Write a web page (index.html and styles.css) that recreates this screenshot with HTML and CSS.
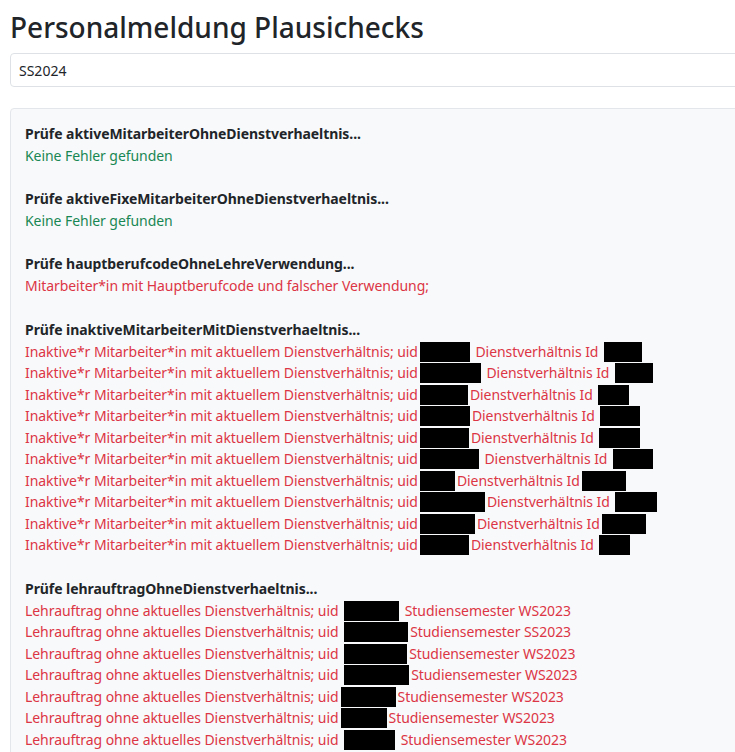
FILE: index.html
```html
<!DOCTYPE html>
<html lang="de">
<head>
  <meta charset="UTF-8" />
  <meta name="viewport" content="width=device-width, initial-scale=1.0" />
  <title>Personalmeldung Plausichecks</title>
  <link rel="stylesheet" href="styles.css">
</head>
<body>
  <div class="page">
    <h1>Personalmeldung Plausichecks</h1>

    <input type="text" class="semester-input" value="SS2024" />

    <div class="results">
      <div class="check">
        <div class="check-title">Prüfe aktiveMitarbeiterOhneDienstverhaeltnis...</div>
        <div class="ok">Keine Fehler gefunden</div>
      </div>

      <div class="check">
        <div class="check-title">Prüfe aktiveFixeMitarbeiterOhneDienstverhaeltnis...</div>
        <div class="ok">Keine Fehler gefunden</div>
      </div>

      <div class="check">
        <div class="check-title">Prüfe hauptberufcodeOhneLehreVerwendung...</div>
        <div class="error">Mitarbeiter*in mit Hauptberufcode und falscher Verwendung;</div>
      </div>

      <div class="check">
        <div class="check-title">Prüfe inaktiveMitarbeiterMitDienstverhaeltnis...</div>
        <div class="error">Inaktive*r Mitarbeiter*in mit aktuellem Dienstverhältnis; uid<span class="redacted" style="width:50px"></span> Dienstverhältnis Id <span class="redacted" style="width:38px"></span></div>
        <div class="error">Inaktive*r Mitarbeiter*in mit aktuellem Dienstverhältnis; uid<span class="redacted" style="width:61px"></span> Dienstverhältnis Id <span class="redacted" style="width:38px"></span></div>
        <div class="error">Inaktive*r Mitarbeiter*in mit aktuellem Dienstverhältnis; uid<span class="redacted" style="width:48px"></span>Dienstverhältnis Id <span class="redacted" style="width:31px"></span></div>
        <div class="error">Inaktive*r Mitarbeiter*in mit aktuellem Dienstverhältnis; uid<span class="redacted" style="width:50px"></span>Dienstverhältnis Id <span class="redacted" style="width:40px"></span></div>
        <div class="error">Inaktive*r Mitarbeiter*in mit aktuellem Dienstverhältnis; uid<span class="redacted" style="width:49px"></span>Dienstverhältnis Id <span class="redacted" style="width:41px"></span></div>
        <div class="error">Inaktive*r Mitarbeiter*in mit aktuellem Dienstverhältnis; uid<span class="redacted" style="width:59px"></span> Dienstverhältnis Id <span class="redacted" style="width:40px"></span></div>
        <div class="error">Inaktive*r Mitarbeiter*in mit aktuellem Dienstverhältnis; uid<span class="redacted" style="width:35px"></span>Dienstverhältnis Id<span class="redacted" style="width:44px"></span></div>
        <div class="error">Inaktive*r Mitarbeiter*in mit aktuellem Dienstverhältnis; uid<span class="redacted" style="width:65px"></span>Dienstverhältnis Id <span class="redacted" style="width:42px"></span></div>
        <div class="error">Inaktive*r Mitarbeiter*in mit aktuellem Dienstverhältnis; uid<span class="redacted" style="width:55px"></span>Dienstverhältnis Id<span class="redacted" style="width:44px"></span></div>
        <div class="error">Inaktive*r Mitarbeiter*in mit aktuellem Dienstverhältnis; uid<span class="redacted" style="width:49px"></span>Dienstverhältnis Id <span class="redacted" style="width:31px"></span></div>
      </div>

      <div class="check">
        <div class="check-title">Prüfe lehrauftragOhneDienstverhaeltnis...</div>
        <div class="error">Lehrauftrag ohne aktuelles Dienstverhältnis; uid <span class="redacted" style="width:55px"></span> Studiensemester WS2023</div>
        <div class="error">Lehrauftrag ohne aktuelles Dienstverhältnis; uid <span class="redacted" style="width:64px"></span>Studiensemester SS2023</div>
        <div class="error">Lehrauftrag ohne aktuelles Dienstverhältnis; uid <span class="redacted" style="width:63px"></span>Studiensemester WS2023</div>
        <div class="error">Lehrauftrag ohne aktuelles Dienstverhältnis; uid <span class="redacted" style="width:65px"></span>Studiensemester WS2023</div>
        <div class="error">Lehrauftrag ohne aktuelles Dienstverhältnis; uid<span class="redacted" style="width:55px"></span>Studiensemester WS2023</div>
        <div class="error">Lehrauftrag ohne aktuelles Dienstverhältnis; uid<span class="redacted" style="width:46px"></span>Studiensemester WS2023</div>
        <div class="error">Lehrauftrag ohne aktuelles Dienstverhältnis; uid <span class="redacted" style="width:51px"></span> Studiensemester WS2023</div>
      </div>
    </div>
  </div>
</body>
</html>
```

FILE: styles.css
```css
html, body {
  overflow: hidden;
}

body {
  font-family: "Noto Sans", "Open Sans", sans-serif;
  font-size: 14px;
  letter-spacing: -0.06px;
  color: #212529;
  background-color: #fff;
  margin: 0;
}

.page {
  width: 760px;
  padding-left: 10px;
}

h1 {
  font-size: 28px;
  font-weight: 500;
  letter-spacing: 0;
  line-height: 38px;
  margin: 8px 0 7px;
}

.semester-input {
  display: block;
  box-sizing: border-box;
  width: 100%;
  height: 34px;
  padding: 0 8px;
  font-family: inherit;
  font-size: 14px;
  color: #212529;
  border: 1px solid #dee2e6;
  border-radius: 4px;
  background: #fff;
}

.results {
  margin-top: 21px;
  padding: 14px 14px 0;
  background-color: #f8f9fa;
  border: 1px solid #e3e6ea;
  border-radius: 4px;
}

.check {
  margin-bottom: 22px;
}

.check-title {
  font-weight: 700;
  line-height: 21px;
  margin-bottom: 1px;
}

.ok {
  color: #198754;
  line-height: 21px;
}

.error {
  color: #dc3545;
  line-height: 21.5px;
  white-space: nowrap;
}

.redacted {
  display: inline-block;
  height: 20px;
  vertical-align: -5px;
  margin: 0 2px;
  background-color: #000;
}
```
